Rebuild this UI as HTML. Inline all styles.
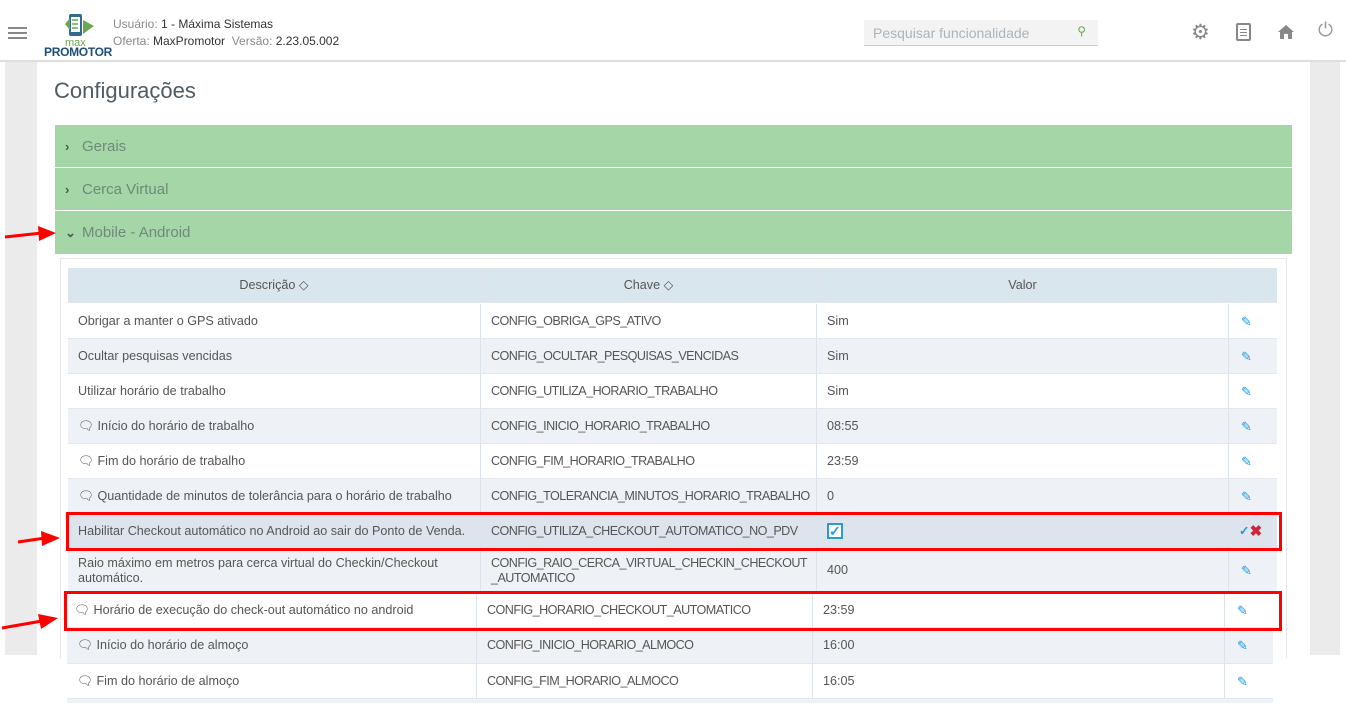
<!DOCTYPE html>
<html><head><meta charset="utf-8"><style>
*{margin:0;padding:0;box-sizing:border-box}
body{width:1346px;height:717px;background:#fff;font-family:"Liberation Sans",sans-serif;position:relative;overflow:hidden;color:#555}
.a{position:absolute}
.row{position:absolute;height:35px;font-size:12.6px;color:#555;border-bottom:1px solid #e2e8ee;white-space:nowrap}
.row div{position:absolute;top:0;height:100%;display:flex;align-items:center;padding-left:10px;border-right:1px solid #dde3ea;line-height:15px}
.row div.k{letter-spacing:-0.55px}
.acc{position:absolute;left:55px;width:1237px;height:42px;background:#a5d6a7;color:#6e8a78;font-size:15px;display:flex;align-items:center;padding-left:27px}
.acc span.c{position:absolute;left:10px;font-size:13px;color:#4a5a50;font-weight:bold}
.pen{color:#1e9be0;font-size:13px}
.red{position:absolute;border:3px solid #f00}
</style></head><body>
<div class="a" style="left:8px;top:27px;width:19px;height:2px;background:#888;box-shadow:0 5px 0 #888,0 10px 0 #888"></div>
<svg class="a" style="left:62px;top:12px" width="36" height="30" viewBox="0 0 36 30"><rect x="7" y="2" width="13" height="22" rx="2" fill="#2f6b8f"/><rect x="9" y="5" width="9" height="15" fill="#fff"/><path d="M3 12 L8 6 L8 18 Z M21 8 L32 14 L21 22 Z" fill="#6aa84f"/><path d="M10 8h6M10 12h6M10 16h6" stroke="#6aa84f" stroke-width="1.5"/></svg>
<div class="a" style="left:65px;top:37px;font-size:11px;color:#6aa84f">max</div>
<div class="a" style="left:44px;top:45px;font-size:12px;font-weight:bold;color:#1f4e79;letter-spacing:-0.3px">PROMOTOR</div>
<div class="a" style="left:113px;top:17px;font-size:12px;color:#888">Usuário: <span style="color:#333">1 - Máxima Sistemas</span></div>
<div class="a" style="left:113px;top:34px;font-size:12px;color:#888">Oferta: <span style="color:#333">MaxPromotor</span> &nbsp;Versão: <span style="color:#333">2.23.05.002</span></div>
<div class="a" style="left:864px;top:20px;width:234px;height:26px;background:#f3f3f3;border-bottom:1px solid #c8d0d6;font-size:14px;color:#aab4bb;padding:5px 9px">Pesquisar funcionalidade<span style="position:absolute;right:12px;top:4px;color:#6aa84f;font-size:12px">⚲</span></div>
<div class="a" style="left:1191px;top:20px;font-size:21px;color:#888">⚙</div>
<div class="a" style="left:1236px;top:23px;width:15px;height:18px;border:2px solid #888;border-radius:2px"></div>
<div class="a" style="left:1240px;top:29px;width:7px;height:1px;background:#888;box-shadow:0 3px 0 #888,0 6px 0 #888"></div>
<svg class="a" style="left:1277px;top:24px" width="18" height="16" viewBox="0 0 18 16"><path d="M9 1 L1 8 H3 V15 H7 V10 H11 V15 H15 V8 H17 Z" fill="#888"/></svg>
<div class="a" style="left:1318px;top:20px;font-size:19px;color:#999">⏻</div>
<div class="a" style="left:0;top:60px;width:1346px;height:2px;background:#ddd"></div>
<div class="a" style="left:5px;top:62px;width:32px;height:593px;background:#ebebeb"></div>
<div class="a" style="left:1310px;top:62px;width:30px;height:593px;background:#ebebeb"></div>
<div class="a" style="left:54px;top:78px;font-size:22px;color:#4f5b62">Configurações</div>
<div class="acc" style="top:125px"><span class="c">›</span>Gerais</div>
<div class="acc" style="top:168px"><span class="c">›</span>Cerca Virtual</div>
<div class="acc" style="top:211px;height:43px"><span class="c">⌄</span>Mobile - Android</div>
<div class="a" style="left:60px;top:258px;width:1227px;height:400px;border:1px solid #e6e6e6;border-bottom:none"></div>
<div class="row" style="left:68px;top:268px;width:1209px;background:#dae6ee;color:#555"><div style="left:0;width:413px;justify-content:center;padding:0">Descrição ◇</div><div style="left:413px;width:336px;justify-content:center;padding:0">Chave ◇</div><div style="left:749px;width:412px;justify-content:center;padding:0">Valor</div></div>
<div class="row" style="left:68px;top:304px;width:1209px;background:#fff"><div style="left:0;width:413px">Obrigar a manter o GPS ativado</div><div class="k" style="left:413px;width:336px">CONFIG_OBRIGA_GPS_ATIVO</div><div style="left:749px;width:412px">Sim</div><div style="left:1161px;width:48px;border:none"><span class="pen" style="margin-left:2px">✎</span></div></div>
<div class="row" style="left:68px;top:339px;width:1209px;background:#eef2f6"><div style="left:0;width:413px">Ocultar pesquisas vencidas</div><div class="k" style="left:413px;width:336px">CONFIG_OCULTAR_PESQUISAS_VENCIDAS</div><div style="left:749px;width:412px">Sim</div><div style="left:1161px;width:48px;border:none"><span class="pen" style="margin-left:2px">✎</span></div></div>
<div class="row" style="left:68px;top:374px;width:1209px;background:#fff"><div style="left:0;width:413px">Utilizar horário de trabalho</div><div class="k" style="left:413px;width:336px">CONFIG_UTILIZA_HORARIO_TRABALHO</div><div style="left:749px;width:412px">Sim</div><div style="left:1161px;width:48px;border:none"><span class="pen" style="margin-left:2px">✎</span></div></div>
<div class="row" style="left:68px;top:409px;width:1209px;background:#eef2f6"><div style="left:0;width:413px">🗨&#xFE0E; Início do horário de trabalho</div><div class="k" style="left:413px;width:336px">CONFIG_INICIO_HORARIO_TRABALHO</div><div style="left:749px;width:412px">08:55</div><div style="left:1161px;width:48px;border:none"><span class="pen" style="margin-left:2px">✎</span></div></div>
<div class="row" style="left:68px;top:444px;width:1209px;background:#fff"><div style="left:0;width:413px">🗨&#xFE0E; Fim do horário de trabalho</div><div class="k" style="left:413px;width:336px">CONFIG_FIM_HORARIO_TRABALHO</div><div style="left:749px;width:412px">23:59</div><div style="left:1161px;width:48px;border:none"><span class="pen" style="margin-left:2px">✎</span></div></div>
<div class="row" style="left:68px;top:479px;width:1209px;background:#eef2f6"><div style="left:0;width:413px">🗨&#xFE0E; Quantidade de minutos de tolerância para o horário de trabalho</div><div class="k" style="left:413px;width:336px">CONFIG_TOLERANCIA_MINUTOS_HORARIO_TRABALHO</div><div style="left:749px;width:412px">0</div><div style="left:1161px;width:48px;border:none"><span class="pen" style="margin-left:2px">✎</span></div></div>
<div class="row" style="left:68px;top:514px;width:1209px;background:#dde4ed"><div style="left:0;width:413px">Habilitar Checkout automático no Android ao sair do Ponto de Venda.</div><div class="k" style="left:413px;width:336px">CONFIG_UTILIZA_CHECKOUT_AUTOMATICO_NO_PDV</div><div style="left:749px;width:412px"><span style="display:inline-block;width:16px;height:16px;border:2px solid #2a9bd0;background:#fff;color:#2a9bd0;font-size:14px;line-height:12px;font-weight:bold">✓</span></div><div style="left:1161px;width:48px;border:none"><span style="color:#1e9be0;font-weight:bold">✓</span><span style="color:#d0233a;font-weight:bold;font-size:15px">✖</span></div></div>
<div class="row" style="left:68px;top:549px;width:1209px;height:44px;background:#eef2f6;white-space:normal"><div style="left:0;width:413px">Raio máximo em metros para cerca virtual do Checkin/Checkout automático.</div><div class="k" style="left:413px;width:336px;padding-right:6px;word-break:break-all">CONFIG_RAIO_CERCA_VIRTUAL_CHECKIN_CHECKOUT_AUTOMATICO</div><div style="left:749px;width:412px">400</div><div style="left:1161px;width:48px;border:none"><span class="pen" style="margin-left:2px">✎</span></div></div>
<div class="row" style="left:64px;top:593px;width:1209px;background:#fff"><div style="left:0;width:413px">🗨&#xFE0E; Horário de execução do check-out automático no android</div><div class="k" style="left:413px;width:336px">CONFIG_HORARIO_CHECKOUT_AUTOMATICO</div><div style="left:749px;width:412px">23:59</div><div style="left:1161px;width:48px;border:none"><span class="pen" style="margin-left:2px">✎</span></div></div>
<div class="row" style="left:67px;top:628px;width:1206px;height:36px;background:#eef2f6"><div style="left:0;width:410px">🗨&#xFE0E; Início do horário de almoço</div><div class="k" style="left:410px;width:336px">CONFIG_INICIO_HORARIO_ALMOCO</div><div style="left:746px;width:412px">16:00</div><div style="left:1158px;width:48px;border:none"><span class="pen" style="margin-left:2px">✎</span></div></div>
<div class="row" style="left:67px;top:664px;width:1206px;background:#fff"><div style="left:0;width:410px">🗨&#xFE0E; Fim do horário de almoço</div><div class="k" style="left:410px;width:336px">CONFIG_FIM_HORARIO_ALMOCO</div><div style="left:746px;width:412px">16:05</div><div style="left:1158px;width:48px;border:none"><span class="pen" style="margin-left:2px">✎</span></div></div>
<div class="a" style="left:67px;top:699px;width:1206px;height:4px;background:#eef2f6"></div>
<div class="red" style="left:66px;top:512px;width:1216px;height:39px"></div>
<div class="red" style="left:64px;top:591px;width:1218px;height:40px"></div>
<svg class="a" style="left:0;top:220px" width="60" height="420" viewBox="0 0 60 420">
<g fill="#f00" stroke="#f00" stroke-width="3"><line x1="5" y1="17" x2="42" y2="13"/><path d="M38 6 L56 13 L39 21Z" stroke="none"/>
<line x1="18" y1="322" x2="45" y2="318"/><path d="M41 311 L60 318 L42 326Z" stroke="none"/>
<line x1="2" y1="408" x2="42" y2="401"/><path d="M38 394 L58 398 L41 409Z" stroke="none"/></g></svg>
</body></html>
